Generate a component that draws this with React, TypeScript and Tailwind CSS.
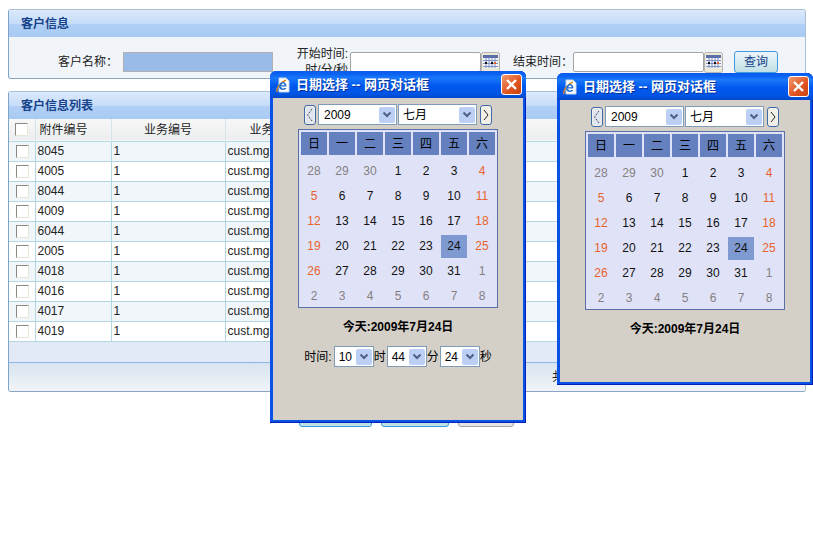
import React from 'react';

const cn = "[font-family:'Liberation_Sans','Noto_Sans_CJK_SC',sans-serif]";

const rows = ['8045', '4005', '8044', '4009', '6044', '2005', '4018', '4016', '4017', '4019'];

const weeks = [
  [28, 29, 30, 1, 2, 3, 4],
  [5, 6, 7, 8, 9, 10, 11],
  [12, 13, 14, 15, 16, 17, 18],
  [19, 20, 21, 22, 23, 24, 25],
  [26, 27, 28, 29, 30, 31, 1],
  [2, 3, 4, 5, 6, 7, 8],
];

const CalendarIcon = () => (
  <svg width="19" height="21" viewBox="0 0 19 21" className="block">
    <rect x="0.5" y="0.5" width="18" height="20" rx="2" fill="#ece9d8" stroke="#b5b5b5" />
    <rect x="2" y="3" width="15" height="3" fill="#5a6ea8" />
    <path d="M2 6h15v10H2z" fill="#f4f6fb" />
    <path d="M2 8.5h15M2 11.5h15M2 14.5h15M5 6v10M8 6v10M11 6v10M14 6v10" stroke="#7f93c4" strokeWidth="1" />
    <rect x="4" y="10" width="2" height="2" fill="#111" />
    <rect x="10" y="10" width="2" height="2" fill="#111" />
    <rect x="13" y="10" width="2" height="2" fill="#e0602a" />
  </svg>
);

const IeIcon = () => (
  <svg width="16" height="16" viewBox="0 0 16 16" className="block">
    <path d="M4 1h7l3 3v11H4z" fill="#fff" stroke="#c8d4e4" />
    <path d="M2 15c-1-3 3-10 9-12" fill="none" stroke="#d8891e" strokeWidth="1.4" />
    <path d="M4.5 9.5h7c0-3-1.5-4.5-3.5-4.5S4 7 4 9.5 6 13 8 13c1.6 0 2.8-.7 3.3-2H9.2c-.3.4-.7.6-1.2.6-.9 0-1.5-.6-1.6-1.6z" fill="#1f6fd0" />
    <path d="M6.3 8.2h3.4C9.600 7 8.900 6.400 8 6.400S6.500 7 6.300 8.200z" fill="#fff" />
  </svg>
);

const Arrow = () => (
  <span className="flex h-[16px] w-[16px] items-center justify-center rounded-[2px] bg-[#bcd0f6]">
    <svg width="10" height="8" viewBox="0 0 10 8">
      <path d="M1.500 1.500 5 5l3.500-3.500" fill="none" stroke="#4d6185" strokeWidth="2" />
    </svg>
  </span>
);

const Select = ({ value, width, mono }: { value: string; width: string; mono?: boolean }) => (
  <div className={`flex h-[21px] items-center justify-between border border-[#7f9db9] bg-white pr-[1px] ${width}`}>
    <span className={`text-[12px] leading-none text-black ${mono ? 'pl-[5px]' : 'pl-[4px]'}`}>{value}</span>
    <Arrow />
  </div>
);

const PageButton = ({ dir }: { dir: 'prev' | 'next' }) => (
  <div className="flex h-[20px] w-[12px] items-center justify-center rounded-[3px] border border-[#3c6aa8] bg-[#f2f0e6]">
    {dir === 'prev' ? (
      <svg width="8" height="16" viewBox="0 0 8 16">
        <rect width="8" height="16" fill="#dfe6f2" />
        <path d="M6 2 1.500 8 6 14" fill="none" stroke="#222" strokeDasharray="1 1" />
      </svg>
    ) : (
      <svg width="8" height="14" viewBox="0 0 8 14">
        <path d="M2 2l4 5-4 5" fill="none" stroke="#222" />
      </svg>
    )}
  </div>
);

const DateDialog = ({ className, withTime }: { className: string; withTime?: boolean }) => (
  <div className={`absolute flex w-[256px] flex-col overflow-hidden rounded-t-[6px] bg-[#0a52e6] shadow-[inset_0_-1px_0_#0024b8,inset_-1px_0_0_#0024b8] ${className}`}>
    <div className="flex h-[27px] shrink-0 items-center bg-[linear-gradient(180deg,#0a5ae8_0%,#0a62f4_12%,#1a78fa_25%,#0058ee_55%,#0055e5_85%,#0247c8_100%)] pl-[5px] pr-[4px]">
      <IeIcon />
      <span className={`ml-[5px] flex-1 whitespace-pre text-[13px] font-bold leading-none text-white [text-shadow:1px_1px_0_#0033a0] ${cn}`}>
        日期选择 -- 网页对话框
      </span>
      <div className="flex h-[21px] w-[21px] items-center justify-center rounded-[3px] border border-white bg-[linear-gradient(135deg,#f09a70,#e0531f_60%,#c94412)]">
        <svg width="13" height="13" viewBox="0 0 13 13">
          <path d="M2 2l9 9M11 2l-9 9" stroke="#fff" strokeWidth="2.400" />
        </svg>
      </div>
    </div>
    <div className={`mx-[3px] mb-[3px] flex flex-1 flex-col items-center bg-[#d4d0c8] pt-[6px] ${cn}`}>
      <div className="flex items-center gap-[1px]">
        <PageButton dir="prev" />
        <Select value="2009" width="w-[79px] ml-[1px]" mono />
        <Select value="七月" width="w-[79px]" />
        <span className="w-[1px]" />
        <PageButton dir="next" />
      </div>
      <div className="mt-[4px] w-[200px] border border-[#5a6ea8] bg-[#e0e3f8] px-[2px] pt-[2px]">
        <div className="grid grid-cols-7 gap-x-[2px]">
          {['日', '一', '二', '三', '四', '五', '六'].map((d) => (
            <div key={d} className="flex h-[23px] items-center justify-center bg-[#6480bf] text-[12px] text-black">{d}</div>
          ))}
        </div>
        <div className="mt-[2px] grid grid-cols-7 gap-x-[2px]">
          {weeks.flatMap((week, w) =>
            week.map((day, i) => {
              const other = (w === 0 && i < 3) || w === 5 || (w === 4 && i === 6);
              const weekend = i === 0 || i === 6;
              const today = w === 3 && i === 5;
              let color = 'text-[#111]';
              if (weekend) color = 'text-[#e8622c]';
              if (other) color = 'text-[#857f80]';
              return (
                <div key={`${w}-${i}`} className={`flex h-[25px] items-center justify-center pt-[3px] text-[12px] ${color}`}>
                  <span className={today ? 'flex h-[23px] w-full items-center justify-center bg-[#7f9ad0]' : ''}>{day}</span>
                </div>
              );
            }),
          )}
        </div>
      </div>
      <div className="mt-[11px] text-[12px] font-bold leading-[16px] text-black">今天:2009年7月24日</div>
      {withTime && (
        <div className="mt-[11px] flex items-center text-[12px] text-black">
          <span>时间:</span>
          <Select value="10" width="w-[40px] ml-[2px]" />
          <span>时</span>
          <Select value="44" width="w-[40px] ml-[1px]" />
          <span>分</span>
          <Select value="24" width="w-[40px] ml-[1px]" />
          <span>秒</span>
        </div>
      )}
    </div>
  </div>
);

const PanelHeader = ({ title }: { title: string }) => (
  <div className="flex h-[27px] items-center bg-[linear-gradient(180deg,#dbe9fb_0%,#c6dcf8_50%,#b2d0f6_52%,#a8caf3_100%)] pl-[12px] text-[12px] font-bold text-[#15428b]">
    {title}
  </div>
);

const Check = () => (
  <span className="block h-[13px] w-[13px] border border-[#8a8a80] border-b-[#e8e6d8] border-r-[#e8e6d8] bg-white" />
);

export default function App() {
  return (
    <div className={`relative h-[557px] w-[813px] overflow-hidden bg-white pl-[8px] pt-[9px] text-[12px] text-[#222] ${cn}`}>
      <section className="h-[70px] w-[798px] rounded-[3px] border border-[#a9bfd3] border-b-[#8aa6c4] border-l-[#7ea4c8] bg-[#f1f5f9]">
        <PanelHeader title="客户信息" />
        <div className="flex items-center pt-[9px]">
          <span className="ml-[49px] w-[65px] whitespace-nowrap">客户名称：</span>
          <span className="h-[20px] w-[150px] border border-[#b0b0b0] bg-[#98bbe8]" />
          <div className="ml-[23px] w-[52px] text-right leading-[16px]">
            <div className="whitespace-nowrap">开始时间:</div>
            <div className="whitespace-nowrap">时/分/秒</div>
          </div>
          <span className="ml-[2px] h-[20px] w-[131px] rounded-[2px] border border-[#a5a5a5] bg-white" />
          <CalendarIcon />
          <span className="ml-[13px] w-[60px] whitespace-nowrap">结束时间：</span>
          <span className="h-[20px] w-[131px] rounded-[2px] border border-[#a5a5a5] bg-white" />
          <CalendarIcon />
          <button className="ml-[11px] h-[22px] w-[44px] rounded-[3px] border border-[#3f9be0] bg-[linear-gradient(180deg,#eef6f8,#bfe0e6)] text-[12px] text-[#15428b]">查询</button>
        </div>
      </section>

      <section className="mt-[12px] h-[301px] w-[798px] rounded-[3px] border border-[#a9bfd3] border-b-[#8aa6c4] border-l-[#7ea4c8] bg-white">
        <PanelHeader title="客户信息列表" />
        <table className="w-full table-fixed border-collapse">
          <colgroup>
            <col className="w-[26px]" />
            <col className="w-[76px]" />
            <col className="w-[114px]" />
            <col />
          </colgroup>
          <thead>
            <tr className="h-[22px] border-b border-[#b5d6e3] bg-[linear-gradient(180deg,#f8f8f8,#ebedee)]">
              <th className="border-r border-[#d5e4ea] pl-[6px] font-normal"><Check /></th>
              <th className="border-r border-[#d5e4ea] pl-[4px] text-left font-normal">附件编号</th>
              <th className="border-r border-[#d5e4ea] font-normal">业务编号</th>
              <th className="pl-[24px] text-left font-normal">业务名称</th>
            </tr>
          </thead>
          <tbody>
            {rows.map((id, i) => (
              <tr key={id} className={`h-[20px] border-b border-[#b5d6e3] ${i % 2 === 0 ? 'bg-[#f1f6fa]' : 'bg-white'}`}>
                <td className="border-r border-[#b5d6e3] pl-[7px] align-middle"><Check /></td>
                <td className="border-r border-[#b5d6e3] pl-[2px] leading-none">{id}</td>
                <td className="border-r border-[#b5d6e3] pl-[2px] leading-none">1</td>
                <td className="pl-[2px] leading-none">cust.mgr.view</td>
              </tr>
            ))}
          </tbody>
        </table>
        <div className="h-[21px] border-b border-[#8db6e8] bg-[#e2eaf8]" />
        <div className="flex h-[28px] items-center justify-start rounded-b-[3px] bg-[linear-gradient(180deg,#d8e4f0,#f0f4f8)] pl-[543px]">共10条记录</div>
      </section>

      <div className="mt-[13px] flex h-[22px] text-[12px]">
        <button className="ml-[291px] w-[73px] rounded-[3px] border border-[#3f9be0] bg-[#bfe0e6]">保存</button>
        <button className="ml-[9px] w-[68px] rounded-[3px] border border-[#3f9be0] bg-[#bfe0e6]">重置</button>
        <button className="ml-[9px] w-[56px] rounded-[3px] border border-[#a5a5a5] bg-[#e5e5e5]">关闭</button>
      </div>

      <DateDialog className="left-[270px] top-[71px] h-[352px]" withTime />
      <DateDialog className="left-[557px] top-[73px] h-[312px]" />
    </div>
  );
}
